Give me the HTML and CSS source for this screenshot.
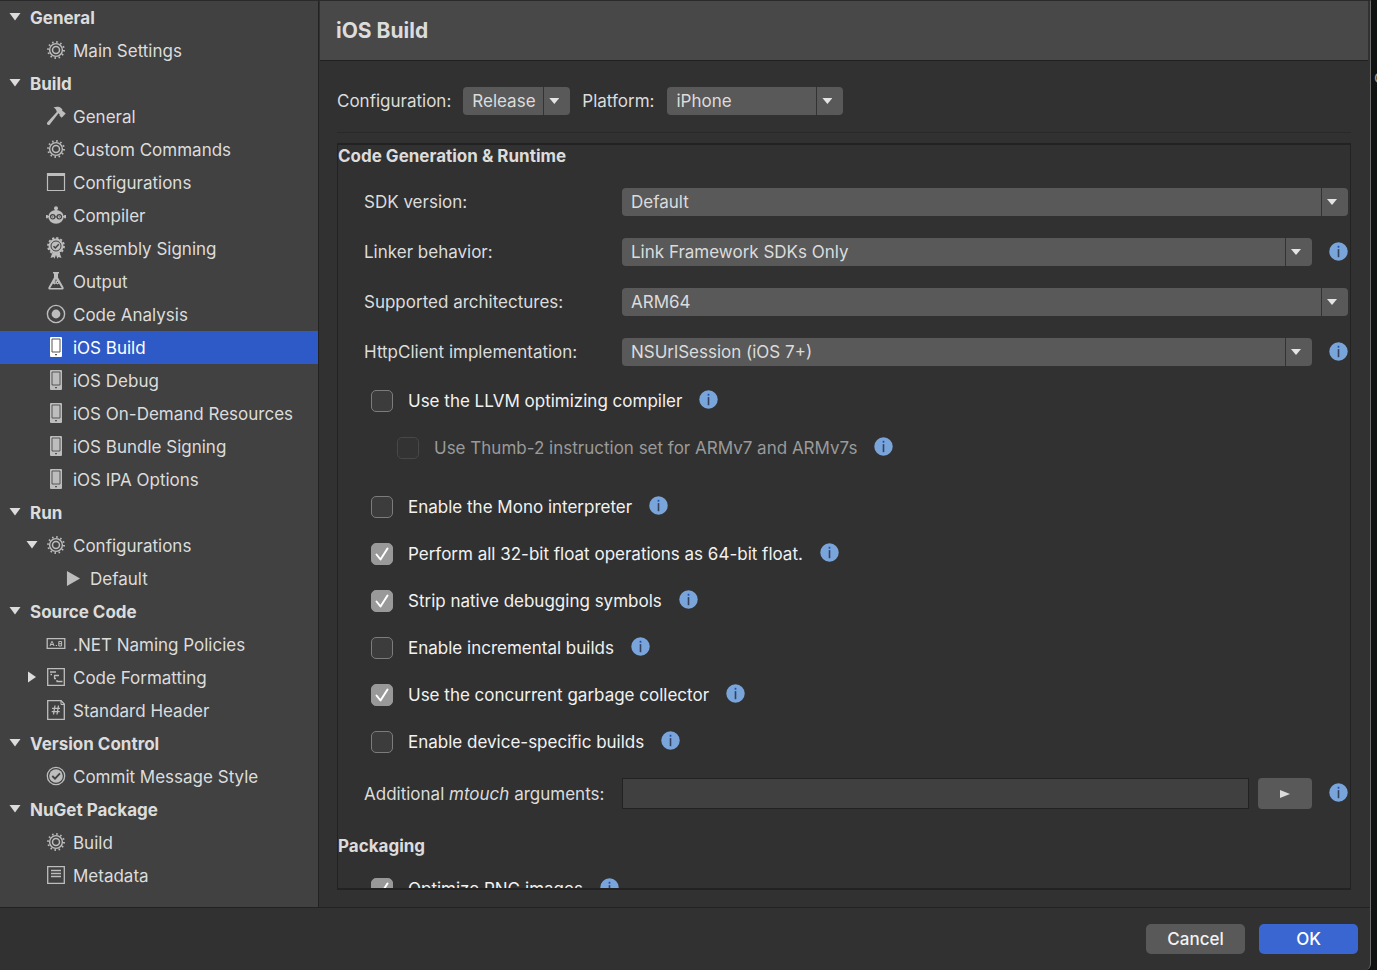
FILE: index.html
```html
<!DOCTYPE html>
<html lang="en">
<head>
  <meta charset="UTF-8" />
  <title>Project Options</title>
  <link rel="stylesheet" href="styles.css">
</head>
<body>

  <!-- icons -->
  <svg class="sprite" aria-hidden="true">
    <symbol id="down" viewBox="0 0 12 8"><path d="M.5 0h11L6 7.500z" fill="currentColor"/></symbol>
    <symbol id="right" viewBox="0 0 12 12"><path d="M2 .5v11L10 6z" fill="currentColor"/></symbol>
    <symbol id="insert" viewBox="0 0 12 10"><path d="M1 1v8l10-4z" fill="currentColor"/></symbol>
    <symbol id="gear" viewBox="0 0 20 20">
      <g fill="none" stroke="currentColor">
        <circle cx="10" cy="10" r="6.400" stroke-width="1.400"/>
        <circle cx="10" cy="10" r="3.500" stroke-width="1.500"/>
        <circle cx="10" cy="10" r="8" stroke-width="1.900" stroke-dasharray="1.500 2.689"/>
      </g>
    </symbol>
    <symbol id="hammer" viewBox="0 0 20 20">
      <path d="M7.500 1.500c3-1.300 6-1 7.500.5l1.400 1.500-.2 1.500 1.200.5 2.300 1.900-4 4.300-2.100-1.900.1-1.400-1.200-1.100L3.600 18.800c-1.600 1-3.400-.6-2.400-2.200L10.800 6C10.500 3.900 9.300 2.600 7.500 1.500z" fill="currentColor"/>
    </symbol>
    <symbol id="window" viewBox="0 0 20 20">
      <path d="M1.500 1.500h17v17h-17z" fill="none" stroke="currentColor" stroke-width="1.200"/>
      <path d="M1 1h18v3H1z" fill="currentColor"/>
    </symbol>
    <symbol id="robot" viewBox="0 0 22 20">
      <g fill="currentColor">
        <circle cx="11" cy="2.500" r="2.200"/><path d="M10 3h2v3h-2zM0 11h22v1.600H0z"/>
        <path d="M2.500 12a8.500 7.500 0 0 1 17 0 8.500 7.500 0 0 1-17 0z"/>
        <rect x="0" y="10" width="2" height="3.600"/><rect x="20" y="10" width="2" height="3.600"/>
      </g>
      <g fill="#bdbdbd" stroke="#414141" stroke-width="1.300"><circle cx="7.400" cy="12" r="2.400"/><circle cx="14.600" cy="12" r="2.400"/></g>
      <path d="M9.800 12h2.400" stroke="#414141"/>
      <circle cx="7.400" cy="12" r=".7" fill="#414141"/><circle cx="14.600" cy="12" r=".7" fill="#414141"/>
    </symbol>
    <symbol id="badge" viewBox="0 0 20 22">
      <path d="M6.500 15.500L4.500 21l3-1 1 1.800L10 18l1.500 3.800 1-1.800 3 1-2-5.500z" fill="currentColor"/>
      <circle cx="10" cy="9" r="7.500" fill="currentColor"/>
      <circle cx="10" cy="9" r="8" fill="none" stroke="currentColor" stroke-width="1.800" stroke-dasharray="2.200 1.989"/>
      <circle cx="10" cy="9" r="5" fill="none" stroke="#414141" stroke-width="1"/>
      <path d="M7.500 9.200l1.800 1.700 3.500-3.700" fill="none" stroke="#414141" stroke-width="1.500"/>
    </symbol>
    <symbol id="flask" viewBox="0 0 20 20">
      <path d="M7 1h6v1.600h-1v4l5.500 9.600c.6 1.500-.1 2.300-1.500 2.300H4c-1.400 0-2.100-.8-1.500-2.300L8 6.600v-4H7z" fill="currentColor"/>
      <path d="M7 12.500L4.300 16.900h11.400L13 12.500l-1.500 1-1.500-1-1.500 1z" fill="#414141"/>
      <path d="M10 8.500v1.500M8.800 11h1M11 11.500h1" stroke="#414141"/>
    </symbol>
    <symbol id="target" viewBox="0 0 20 20">
      <circle cx="10" cy="10" r="8.600" fill="none" stroke="currentColor" stroke-width="1.400"/>
      <circle cx="10" cy="10" r="4.400" fill="currentColor"/>
    </symbol>
    <symbol id="phone" viewBox="0 0 20 22">
      <rect x="4" y="1" width="12" height="20" rx="1" fill="currentColor"/>
      <path class="phone-edge" d="M6 3h8v13H6z" fill="none" stroke-width="1"/>
      <path class="phone-edge" d="M9 18.700h2" stroke-width="1.200"/>
    </symbol>
    <symbol id="naming" viewBox="0 0 20 20">
      <g fill="none" stroke="currentColor">
        <path d="M1.200 4.700h17.600v9.600H1.200z" stroke-width="1.300"/>
        <path d="M4 12l1.700-4.500h.6L8 12M4.800 10.500h2.500M12.800 7.500h2.800V12h-2.800zM12.800 9.700h2.800"/>
        <path d="M9.800 11.500h1.200"/>
      </g>
    </symbol>
    <symbol id="format" viewBox="0 0 20 20">
      <g fill="none" stroke="currentColor">
        <path d="M1.700 1.700h16.600v16.600H1.700z" stroke-width="1.300"/>
        <path d="M4 5h6M4.500 7.500h1.500M8 8.500h5M8.500 8.500v3M8 11.500h2M10.500 14.500h6M11 14.500v-1.500" stroke-width="1.300"/>
      </g>
    </symbol>
    <symbol id="header" viewBox="0 0 20 22">
      <path d="M1.700 1.700h13.300l3.300 3.300v15.300H1.700z" fill="none" stroke="currentColor" stroke-width="1.300"/>
      <path d="M15 1v4.500h3.500" fill="none" stroke="currentColor"/>
      <path d="M9 6.500L7.500 15.500M12.500 6.500L11 15.500M6 9.300h8M5.700 12.700h8" stroke="currentColor" stroke-width="1.300"/>
    </symbol>
    <symbol id="commit" viewBox="0 0 20 20">
      <circle cx="10" cy="10" r="8.700" fill="none" stroke="currentColor" stroke-width="1.300"/>
      <circle cx="10" cy="10" r="6.800" fill="currentColor"/>
      <path d="M6.300 10l2.700 2.700 5-5.400" fill="none" stroke="#414141" stroke-width="1.800"/>
    </symbol>
    <symbol id="metadata" viewBox="0 0 20 20">
      <path d="M1.700 1.700h16.600v16.600H1.700zM5 5.500h10M5 8.500h10M5 11.500h10" fill="none" stroke="currentColor" stroke-width="1.300"/>
    </symbol>
    <symbol id="play" viewBox="0 0 16 18"><path d="M1 1v16l14-8z" fill="currentColor"/></symbol>
    <symbol id="info" viewBox="0 0 20 20">
      <circle cx="10" cy="10" r="9.700" fill="#7aa5da"/>
      <path d="M10 7.500v8.500" stroke="#33425e" stroke-width="1.700"/>
      <path d="M10 4v2" stroke="#1f4fb5" stroke-width="1.800"/>
    </symbol>
  </svg>

  <div class="dialog">
    <div class="columns">
      <nav class="sidebar">
        <button class="row group"><svg class="arrow"><use href="#down"/></svg>General</button>
        <a class="row item" href="#"><svg class="icon"><use href="#gear"/></svg>Main Settings</a>

        <button class="row group"><svg class="arrow"><use href="#down"/></svg>Build</button>
        <a class="row item" href="#"><svg class="icon"><use href="#hammer"/></svg>General</a>
        <a class="row item" href="#"><svg class="icon"><use href="#gear"/></svg>Custom Commands</a>
        <a class="row item" href="#"><svg class="icon"><use href="#window"/></svg>Configurations</a>
        <a class="row item" href="#"><svg class="icon"><use href="#robot"/></svg>Compiler</a>
        <a class="row item" href="#"><svg class="icon tall"><use href="#badge"/></svg>Assembly Signing</a>
        <a class="row item" href="#"><svg class="icon"><use href="#flask"/></svg>Output</a>
        <a class="row item" href="#"><svg class="icon"><use href="#target"/></svg>Code Analysis</a>
        <a class="row item selected" href="#" aria-current="page"><svg class="icon tall"><use href="#phone"/></svg>iOS Build</a>
        <a class="row item" href="#"><svg class="icon tall"><use href="#phone"/></svg>iOS Debug</a>
        <a class="row item" href="#"><svg class="icon tall"><use href="#phone"/></svg>iOS On-Demand Resources</a>
        <a class="row item" href="#"><svg class="icon tall"><use href="#phone"/></svg>iOS Bundle Signing</a>
        <a class="row item" href="#"><svg class="icon tall"><use href="#phone"/></svg>iOS IPA Options</a>

        <button class="row group"><svg class="arrow"><use href="#down"/></svg>Run</button>
        <button class="row parent"><svg class="arrow"><use href="#down"/></svg><svg class="icon"><use href="#gear"/></svg>Configurations</button>
        <a class="row child" href="#"><svg class="icon"><use href="#play"/></svg>Default</a>

        <button class="row group"><svg class="arrow"><use href="#down"/></svg>Source Code</button>
        <a class="row item" href="#"><svg class="icon"><use href="#naming"/></svg>.NET Naming Policies</a>
        <button class="row parent"><svg class="arrow closed"><use href="#right"/></svg><svg class="icon"><use href="#format"/></svg>Code Formatting</button>
        <a class="row item" href="#"><svg class="icon tall"><use href="#header"/></svg>Standard Header</a>

        <button class="row group"><svg class="arrow"><use href="#down"/></svg>Version Control</button>
        <a class="row item" href="#"><svg class="icon"><use href="#commit"/></svg>Commit Message Style</a>

        <button class="row group"><svg class="arrow"><use href="#down"/></svg>NuGet Package</button>
        <a class="row item" href="#"><svg class="icon"><use href="#gear"/></svg>Build</a>
        <a class="row item" href="#"><svg class="icon"><use href="#metadata"/></svg>Metadata</a>
      </nav>

      <main class="content">
        <h1 class="title">iOS Build</h1>

        <div class="toolbar">
          <label for="configuration">Configuration:</label>
          <span class="select configuration"><select id="configuration"><option>Release</option></select></span>
          <label for="platform">Platform:</label>
          <span class="select platform"><select id="platform"><option>iPhone</option></select></span>
        </div>

        <form class="panel" id="options">
          <h2>Code Generation &amp; Runtime</h2>

          <div class="fields">
            <div class="field">
              <label for="sdk">SDK version:</label>
              <span class="select"><select id="sdk"><option>Default</option></select></span>
            </div>
            <div class="field">
              <label for="linker">Linker behavior:</label>
              <span class="select"><select id="linker"><option>Link Framework SDKs Only</option></select></span>
              <button type="button" class="info" aria-label="Info"><svg><use href="#info"/></svg></button>
            </div>
            <div class="field">
              <label for="arch">Supported architectures:</label>
              <span class="select"><select id="arch"><option>ARM64</option></select></span>
            </div>
            <div class="field">
              <label for="http">HttpClient implementation:</label>
              <span class="select"><select id="http"><option>NSUrlSession (iOS 7+)</option></select></span>
              <button type="button" class="info" aria-label="Info"><svg><use href="#info"/></svg></button>
            </div>
          </div>

          <div class="checks">
            <div class="check">
              <input type="checkbox" id="llvm"><label for="llvm">Use the LLVM optimizing compiler</label>
              <button type="button" class="info" aria-label="Info"><svg><use href="#info"/></svg></button>
            </div>
            <div class="check sub">
              <input type="checkbox" id="thumb" disabled><label for="thumb">Use Thumb-2 instruction set for ARMv7 and ARMv7s</label>
              <button type="button" class="info" aria-label="Info"><svg><use href="#info"/></svg></button>
            </div>
            <div class="check">
              <input type="checkbox" id="mono"><label for="mono">Enable the Mono interpreter</label>
              <button type="button" class="info" aria-label="Info"><svg><use href="#info"/></svg></button>
            </div>
            <div class="check">
              <input type="checkbox" id="float" checked><label for="float">Perform all 32-bit float operations as 64-bit float.</label>
              <button type="button" class="info" aria-label="Info"><svg><use href="#info"/></svg></button>
            </div>
            <div class="check">
              <input type="checkbox" id="strip" checked><label for="strip">Strip native debugging symbols</label>
              <button type="button" class="info" aria-label="Info"><svg><use href="#info"/></svg></button>
            </div>
            <div class="check">
              <input type="checkbox" id="incremental"><label for="incremental">Enable incremental builds</label>
              <button type="button" class="info" aria-label="Info"><svg><use href="#info"/></svg></button>
            </div>
            <div class="check">
              <input type="checkbox" id="gc" checked><label for="gc">Use the concurrent garbage collector</label>
              <button type="button" class="info" aria-label="Info"><svg><use href="#info"/></svg></button>
            </div>
            <div class="check">
              <input type="checkbox" id="device"><label for="device">Enable device-specific builds</label>
              <button type="button" class="info" aria-label="Info"><svg><use href="#info"/></svg></button>
            </div>
          </div>

          <div class="field arguments">
            <label for="mtouch">Additional <i>mtouch</i> arguments:</label>
            <input type="text" id="mtouch">
            <button type="button" class="insert" aria-label="Insert"><svg><use href="#insert"/></svg></button>
            <button type="button" class="info" aria-label="Info"><svg><use href="#info"/></svg></button>
          </div>

          <h2>Packaging</h2>

          <div class="checks">
            <div class="check">
              <input type="checkbox" id="png" checked><label for="png">Optimize PNG images</label>
              <button type="button" class="info" aria-label="Info"><svg><use href="#info"/></svg></button>
            </div>
          </div>
        </form>
      </main>
    </div>

    <footer class="footer">
      <button class="btn" type="button">Cancel</button>
      <button class="btn primary" type="submit" form="options">OK</button>
    </footer>
  </div>

  <aside class="behind">c</aside>

</body>
</html>
```
FILE: styles.css
```css
* {
  box-sizing: border-box;
}

body {
  margin: 0;
  height: 100vh;
  display: flex;
  overflow: hidden;
  background-color: #101212;
  color: #dcdcdc;
  font-family: Inter, "Liberation Sans", sans-serif;
  font-size: 17px;
  line-height: 22px;
}

button,
select,
input {
  font: inherit;
  color: inherit;
  margin: 0;
}

button {
  border: none;
  background: none;
  padding: 0;
}

h1,
h2 {
  margin: 0;
  font-size: 17px;
  font-weight: 700;
}

.sprite {
  position: absolute;
  width: 0;
  height: 0;
}

.dialog {
  flex: 1;
  display: flex;
  flex-direction: column;
  background-color: #313131;
  border-top: 1px solid #2a2a2a;
  border-right: 1px solid #6a6a6a;
  border-bottom-right-radius: 6px;
}

.columns {
  flex: 1;
  min-height: 0;
  display: flex;
}

/* sidebar */
.sidebar {
  width: 319px;
  flex-shrink: 0;
  overflow: hidden;
  background-color: #414141;
  border-right: 1px solid #222;
}

.row {
  display: flex;
  align-items: center;
  width: 100%;
  height: 33px;
  padding-top: 1px;
  text-align: left;
  text-decoration: none;
  white-space: nowrap;
  color: #dcdcdc;
}

.group {
  padding-left: 9px;
  gap: 9px;
  font-weight: 700;
}

.item {
  padding-left: 46px;
  gap: 7px;
}

.parent {
  padding-left: 26px;
  gap: 7px;
}

.child {
  padding-left: 66px;
  gap: 9px;
}

.arrow {
  width: 12px;
  height: 8px;
  margin-bottom: 3px;
}

.arrow.closed {
  height: 12px;
}

.icon {
  width: 20px;
  height: 20px;
  margin-bottom: 2px;
  color: #bdbdbd;
}

.icon.tall {
  height: 22px;
}

.parent .arrow {
  margin-right: 1px;
}

.child .icon {
  width: 15px;
  height: 17px;
}

.phone-edge {
  stroke: #555;
}

.selected {
  background-color: #2e5ac8;
  color: #fff;
}

.selected .icon {
  color: #fff;
}

/* content */
.content {
  flex: 1;
  min-width: 0;
  display: flex;
  flex-direction: column;
}

.title {
  height: 60px;
  margin: 0 2px 0 1px;
  padding: 19px 16px;
  background-color: #484848;
  border-bottom: 1px solid #202020;
  font-size: 21px;
}

.toolbar {
  display: flex;
  align-items: center;
  margin: 0 19px 0 18px;
  padding: 26px 0 17px;
  border-bottom: 1px solid #292929;
}

.select {
  position: relative;
  display: flex;
  flex: 1;
}

.select select {
  appearance: none;
  width: 100%;
  height: 28px;
  padding: 0 32px 0 9px;
  border: none;
  border-radius: 4px;
  background: linear-gradient(#333, #333) right 26px top / 1px 100% no-repeat #595959;
}

.select::after {
  content: "";
  position: absolute;
  top: 11px;
  right: 11px;
  width: 10px;
  height: 6px;
  background-color: #e4e4e4;
  clip-path: polygon(0 0, 100% 0, 50% 100%);
  pointer-events: none;
}

.configuration {
  flex: 0 0 107px;
  margin: 0 12px;
}

.platform {
  flex: 0 0 176px;
  margin-left: 13px;
}

.panel {
  flex: 1;
  min-height: 0;
  overflow: hidden;
  margin: 10px 19px 17px 18px;
  padding-right: 2px;
  border: 1px solid #222;
  border-width: 2px 1px;
}

.fields {
  display: flex;
  flex-direction: column;
  gap: 22px;
  margin: 21px 0 11px;
}

.field {
  display: flex;
  align-items: center;
  padding-left: 26px;
}

.field > label {
  width: 258px;
  flex-shrink: 0;
}

.info {
  display: flex;
  margin: 0 0 2px 17px;
}

.info svg {
  width: 19px;
  height: 19px;
}

.check {
  display: flex;
  align-items: center;
  height: 47px;
  padding-left: 33px;
  color: #f2f2f2;
}

.check.sub {
  padding-left: 59px;
  margin-bottom: 12px;
  color: #9a9a9a;
}

.check input {
  appearance: none;
  width: 22px;
  height: 22px;
  margin-right: 15px;
  border: 1px solid #7c7c7c;
  border-radius: 5px;
  background-color: #3c3c3c;
}

.check input:disabled {
  border-color: #484848;
  background-color: #333;
}

.check input:checked {
  border-color: #999;
  background: #999 url("data:image/svg+xml,%3Csvg xmlns='http://www.w3.org/2000/svg' viewBox='0 0 20 20'%3E%3Cpath d='M4.500 10.500l4 5L15.500 4.500' fill='none' stroke='white' stroke-width='2' stroke-linecap='round' stroke-linejoin='round'/%3E%3C/svg%3E") center / 20px 20px no-repeat;
}

.arguments {
  margin: 13px 0 26px;
}

.arguments input {
  flex: 1;
  min-width: 0;
  height: 31px;
  padding: 0 8px;
  border: 1px solid #222;
  background-color: #404040;
}

.insert {
  display: flex;
  align-items: center;
  justify-content: center;
  width: 54px;
  height: 31px;
  margin-left: 9px;
  border-radius: 4px;
  background-color: #595959;
}

.insert svg {
  width: 12px;
  height: 10px;
}

.panel h2 + .checks {
  margin-top: 8px;
}

/* footer */
.footer {
  display: flex;
  justify-content: flex-end;
  gap: 14px;
  height: 63px;
  padding: 16px 12px;
  border-top: 1px solid #222;
}

.btn {
  width: 99px;
  height: 30px;
  border-radius: 5px;
  background-color: #595959;
  color: #f2f2f2;
  font-weight: 500;
}

.btn.primary {
  background-color: #3a66d1;
  color: #fff;
}

/* strip of the window underneath */
.behind {
  width: 6px;
  padding: 66px 0 0 3px;
  overflow: hidden;
  color: #999;
}
```
